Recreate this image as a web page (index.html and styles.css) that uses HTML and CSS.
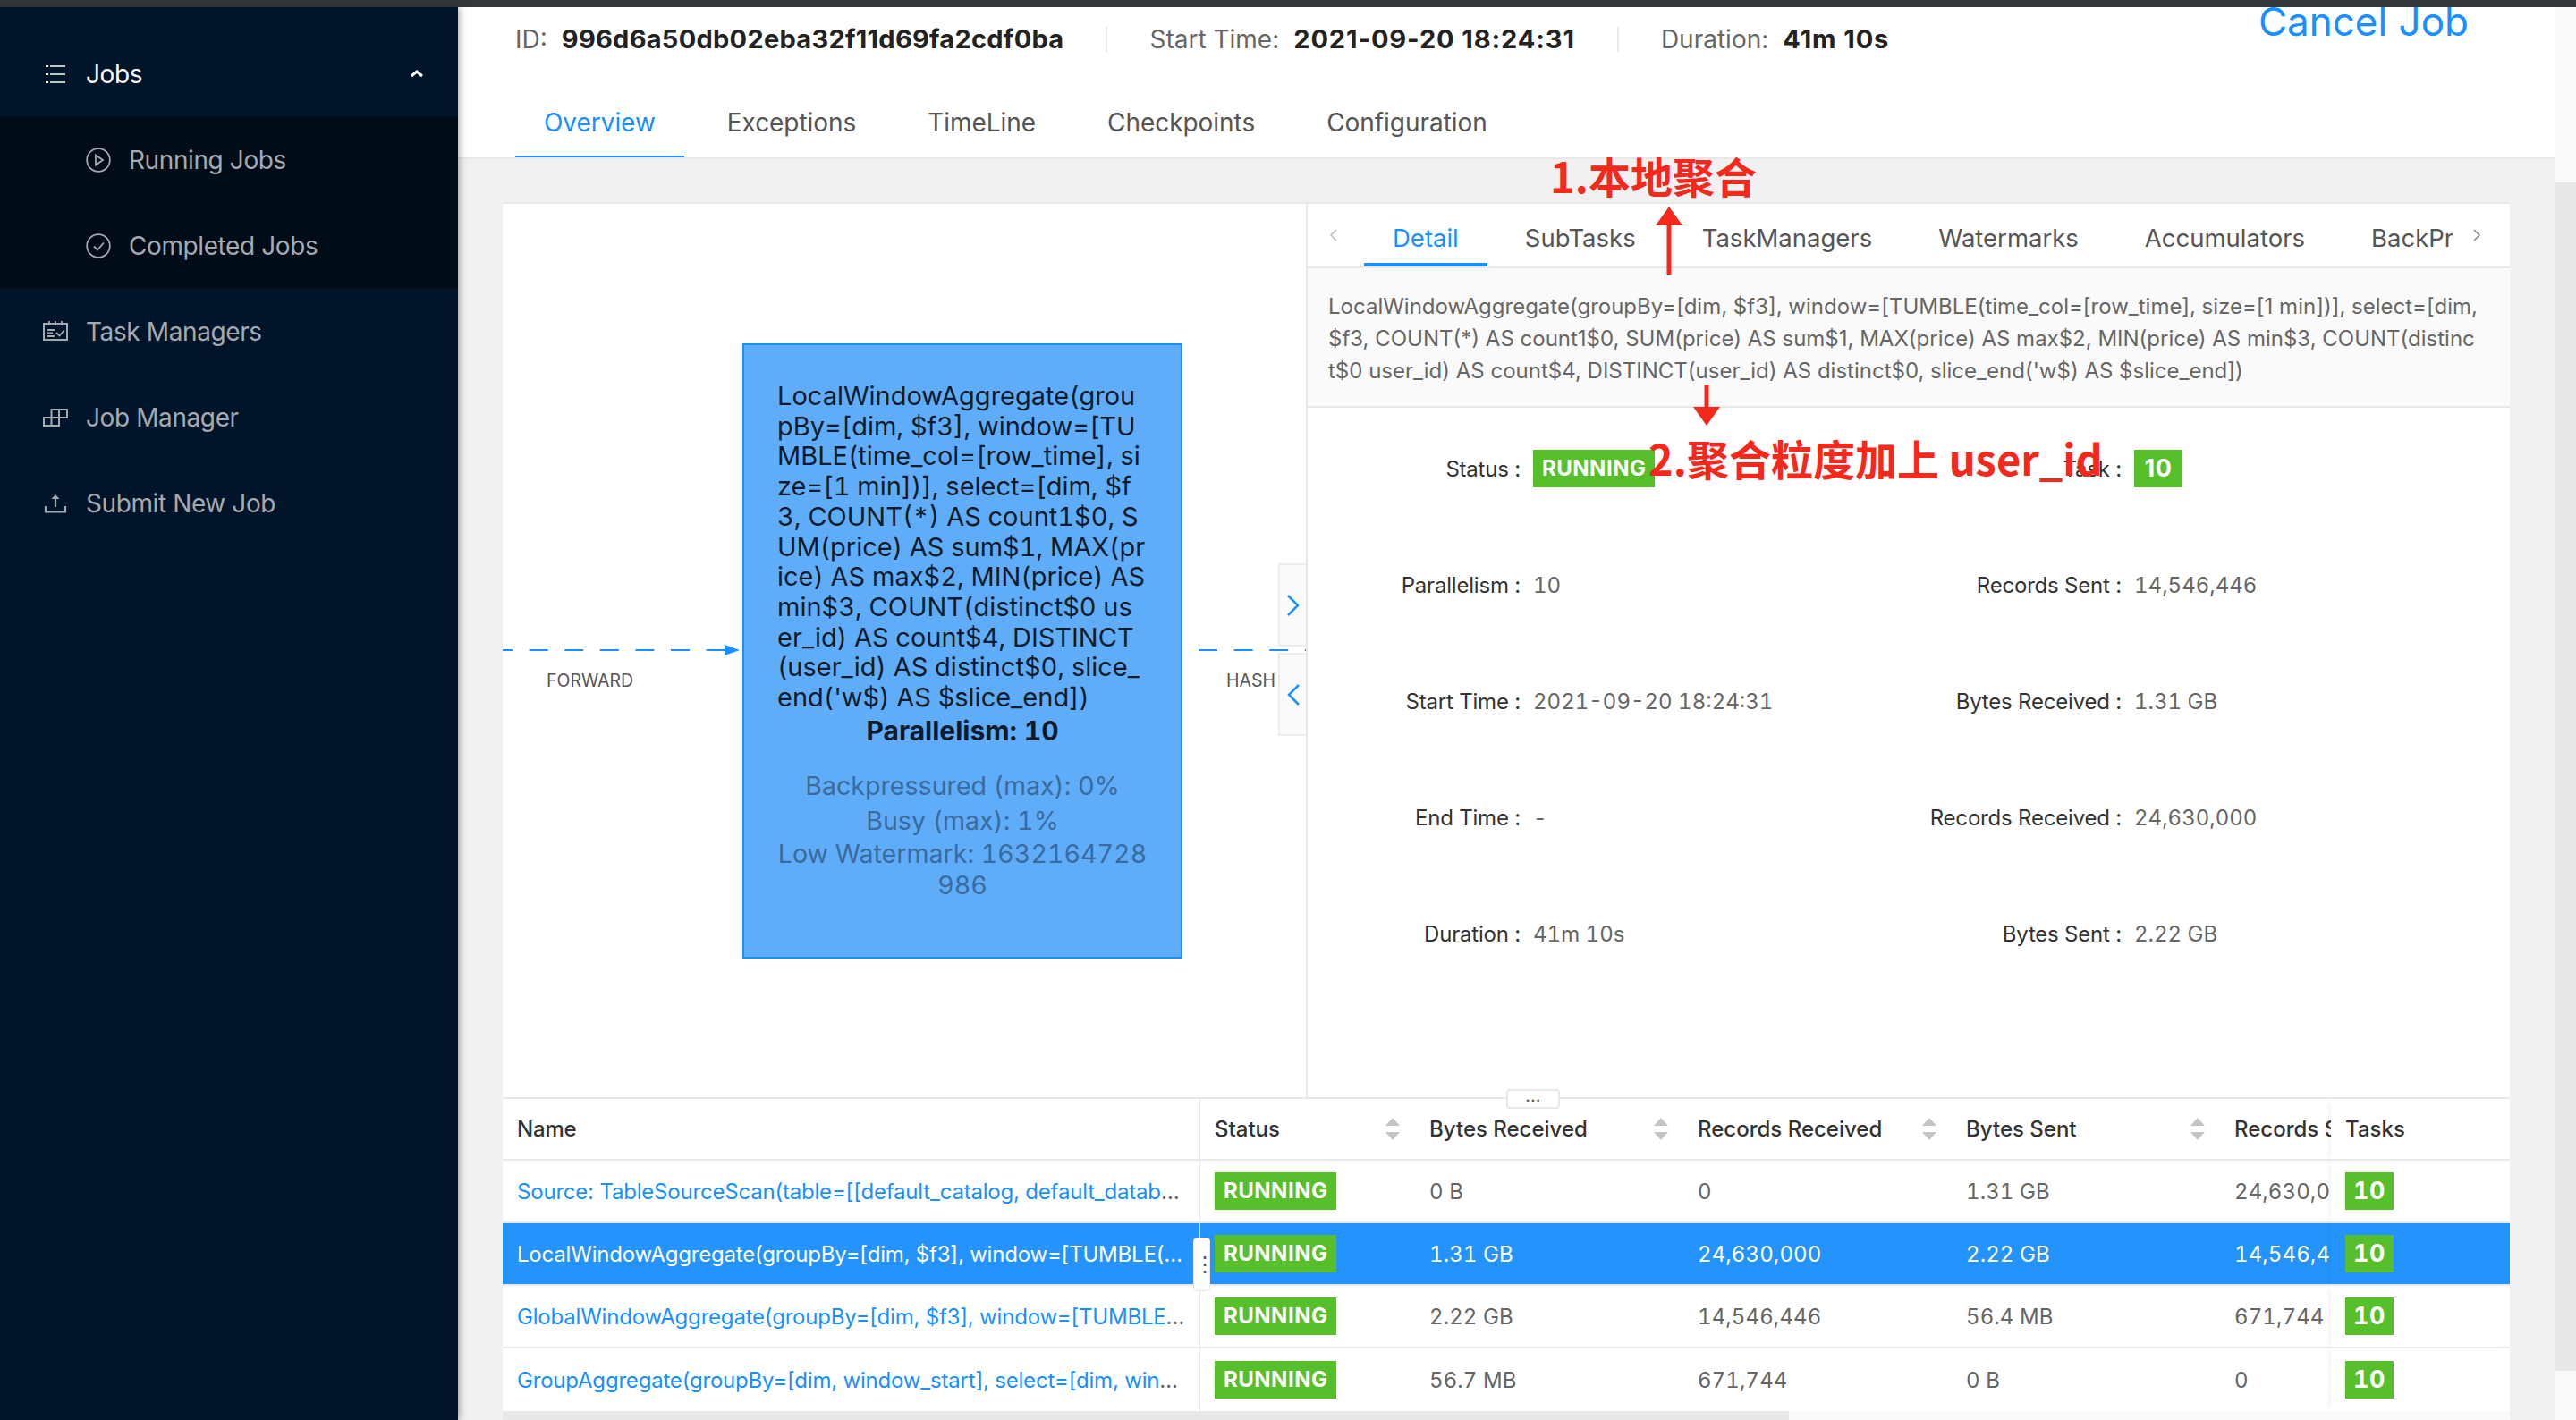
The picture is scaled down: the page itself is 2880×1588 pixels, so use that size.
FILE: index.html
```html
<!DOCTYPE html>
<html lang="en">
<head>
    <meta charset="UTF-8">
    <title>Flink Job Overview</title>
    <link rel="stylesheet" href="styles.css">
</head>
<body>
    <div class="top-strip"></div>
    <div class="page">
        <nav class="sidebar">
            <div class="menu-item menu-open">
                <svg class="menu-icon" viewBox="0 0 28 28"><path d="M8 5h17M8 14h17M8 23h17" fill="none" stroke="currentColor" stroke-width="1.600"/><path d="M3 4h3v2H3zM3 13h3v2H3zM3 22h3v2H3z" fill="currentColor"/></svg>
                <span>Jobs</span>
                <svg class="menu-arrow" viewBox="0 0 16 10"><path d="M2 8l6-5 6 5" fill="none" stroke="currentColor" stroke-width="3"/></svg>
            </div>
            <div class="submenu">
                <div class="menu-item sub-item">
                    <svg class="menu-icon" viewBox="0 0 28 28"><circle cx="14" cy="14" r="12.8" fill="none" stroke="currentColor" stroke-width="1.8"/><path d="M11 8.500l8 5.500-8 5.500z" fill="none" stroke="currentColor" stroke-width="1.8"/></svg>
                    <span>Running Jobs</span>
                </div>
                <div class="menu-item sub-item">
                    <svg class="menu-icon" viewBox="0 0 28 28"><circle cx="14" cy="14" r="12.8" fill="none" stroke="currentColor" stroke-width="1.8"/><path d="M9 14.500l4 4 7-8" fill="none" stroke="currentColor" stroke-width="1.800"/></svg>
                    <span>Completed Jobs</span>
                </div>
            </div>
            <div class="menu-item">
                <svg class="menu-icon" viewBox="0 0 28 28"><path d="M1 5h26v18H1z" fill="none" stroke="currentColor" stroke-width="2"/><path d="M7 2v5M14 2v5M21 2v5M5 12h8M5 15.500h6M5 19h8" fill="none" stroke="currentColor" stroke-width="1.800"/><path d="M15 15l3.500 3.500L24 12" fill="none" stroke="currentColor" stroke-width="1.800"/></svg>
                <span>Task Managers</span>
            </div>
            <div class="menu-item">
                <svg class="menu-icon" viewBox="0 0 28 28"><path d="M1 14h17v9H1zM9.500 14v9M9.500 14V5H27v9h-9M18 5v9" fill="none" stroke="currentColor" stroke-width="2"/></svg>
                <span>Job Manager</span>
            </div>
            <div class="menu-item">
                <svg class="menu-icon" viewBox="0 0 28 28"><path d="M3 17v6.500h22V17M14 18V8" fill="none" stroke="currentColor" stroke-width="2.200"/><path d="M14 4l-4.500 5h9z" fill="currentColor"/></svg>
                <span>Submit New Job</span>
            </div>
        </nav>

        <main class="main">
            <header class="job-header">
                <div class="status-row">
                    <div class="job-info">
                        <span class="info-item"><span class="info-label">ID:</span><b>996d6a50db02eba32f11d69fa2cdf0ba</b></span>
                        <span class="info-item"><span class="info-label">Start Time:</span><b class="num">2021-09-20 18:24:31</b></span>
                        <span class="info-item"><span class="info-label">Duration:</span><b class="num">41m 10s</b></span>
                    </div>
                    <a class="cancel-job">Cancel Job</a>
                </div>
                <div class="job-tabs">
                    <a class="job-tab active">Overview</a>
                    <a class="job-tab">Exceptions</a>
                    <a class="job-tab">TimeLine</a>
                    <a class="job-tab">Checkpoints</a>
                    <a class="job-tab">Configuration</a>
                </div>
            </header>

            <section class="content">
                <div class="panel">
                    <div class="top-split">
                        <div class="graph">
                            <svg class="edges" viewBox="0 0 898 1001">
                                <path d="M0 499H258" stroke="#1890ff" stroke-width="2" stroke-dasharray="21 18.600" stroke-dashoffset="10" fill="none"/>
                                <path d="M248 493l17 6-17 6z" fill="#1890ff"/>
                                <path d="M778 499H898" stroke="#1890ff" stroke-width="2" stroke-dasharray="21 18.600" fill="none"/>
                            </svg>
                            <span class="edge-label edge-forward">FORWARD</span>
                            <span class="edge-label edge-hash">HASH</span>
                            <div class="node">
                                <div class="node-name">LocalWindowAggregate(grou<br>pBy=[dim, $f3], window=[TU<br>MBLE(time_col=[row_time], si<br>ze=[1 min])], select=[dim, $f<br>3, COUNT(*) AS count1$0, S<br>UM(price) AS sum$1, MAX(pr<br>ice) AS max$2, MIN(price) AS<br>min$3, COUNT(distinct$0 us<br>er_id) AS count$4, DISTINCT<br>(user_id) AS distinct$0, slice_<br>end('w$) AS $slice_end])</div>
                                <div class="node-parallel">Parallelism: 10</div>
                                <div class="node-metrics">
                                    <div>Backpressured (max): 0%</div>
                                    <div>Busy (max): 1%</div>
                                    <div class="metric-last">Low Watermark: 1632164728<br>986</div>
                                </div>
                            </div>
                            <div class="graph-toggle toggle-next"><svg viewBox="0 0 16 28"><path d="M2 3l11 11L2 25" fill="none" stroke="#1890ff" stroke-width="2.500"/></svg></div>
                            <div class="graph-toggle toggle-prev"><svg viewBox="0 0 16 28"><path d="M14 3L3 14l11 11" fill="none" stroke="#1890ff" stroke-width="2.500"/></svg></div>
                        </div>

                        <div class="detail">
                            <div class="detail-tabs">
                                <svg class="tab-chevron" viewBox="0 0 10 16"><path d="M8 2L2 8l6 6" fill="none" stroke="#bbb" stroke-width="1.500"/></svg>
                                <div class="detail-tab-list">
                                    <a class="detail-tab active">Detail</a>
                                    <a class="detail-tab">SubTasks</a>
                                    <a class="detail-tab">TaskManagers</a>
                                    <a class="detail-tab">Watermarks</a>
                                    <a class="detail-tab">Accumulators</a>
                                    <a class="detail-tab">BackPressure</a>
                                </div>
                                <svg class="tab-chevron" viewBox="0 0 10 16"><path d="M2 2l6 6-6 6" fill="none" stroke="#888" stroke-width="1.500"/></svg>
                            </div>
                            <div class="description">LocalWindowAggregate(groupBy=[dim, $f3], window=[TUMBLE(time_col=[row_time], size=[1 min])], select=[dim, $f3, COUNT(*) AS count1$0, SUM(price) AS sum$1, MAX(price) AS max$2, MIN(price) AS min$3, COUNT(distinct$0 user_id) AS count$4, DISTINCT(user_id) AS distinct$0, slice_end('w$) AS $slice_end])</div>
                            <div class="props">
                                <div class="prop"><span class="prop-label">Status :</span><span class="tag">RUNNING</span></div>
                                <div class="prop"><span class="prop-label">Task :</span><span class="tag tag-num">10</span></div>
                                <div class="prop"><span class="prop-label">Parallelism :</span><span class="prop-value">10</span></div>
                                <div class="prop"><span class="prop-label">Records Sent :</span><span class="prop-value">14,546,446</span></div>
                                <div class="prop"><span class="prop-label">Start Time :</span><span class="prop-value">2021-09-20 18:24:31</span></div>
                                <div class="prop"><span class="prop-label">Bytes Received :</span><span class="prop-value">1.31 GB</span></div>
                                <div class="prop"><span class="prop-label">End Time :</span><span class="prop-value">-</span></div>
                                <div class="prop"><span class="prop-label">Records Received :</span><span class="prop-value">24,630,000</span></div>
                                <div class="prop"><span class="prop-label">Duration :</span><span class="prop-value">41m 10s</span></div>
                                <div class="prop"><span class="prop-label">Bytes Sent :</span><span class="prop-value">2.22 GB</span></div>
                            </div>
                        </div>
                        <div class="resize-h">...</div>
                    </div>

                    <table class="vertex-table">
                        <colgroup>
                            <col class="col-name"><col class="col-status"><col class="col-num"><col class="col-num"><col class="col-num"><col class="col-cut"><col class="col-tasks">
                        </colgroup>
                        <thead>
                            <tr>
                                <th class="cell-name">Name</th>
                                <th><span class="th-inner">Status<i class="sorter"></i></span></th>
                                <th><span class="th-inner">Bytes Received<i class="sorter"></i></span></th>
                                <th><span class="th-inner">Records Received<i class="sorter"></i></span></th>
                                <th><span class="th-inner">Bytes Sent<i class="sorter"></i></span></th>
                                <th>Records Sent</th>
                                <th class="cell-tasks">Tasks</th>
                            </tr>
                        </thead>
                        <tbody>
                            <tr>
                                <td class="cell-name"><a>Source: TableSourceScan(table=[[default_catalog, default_database, orders]])</a></td>
                                <td><span class="tag">RUNNING</span></td>
                                <td>0 B</td><td>0</td><td>1.31 GB</td><td>24,630,000</td>
                                <td class="cell-tasks"><span class="tag tag-num">10</span></td>
                            </tr>
                            <tr class="selected">
                                <td class="cell-name"><a>LocalWindowAggregate(groupBy=[dim, $f3], window=[TUMBLE(time_col=[row_time]</a></td>
                                <td><span class="tag">RUNNING</span></td>
                                <td>1.31 GB</td><td>24,630,000</td><td>2.22 GB</td><td>14,546,446</td>
                                <td class="cell-tasks"><span class="tag tag-num">10</span></td>
                            </tr>
                            <tr>
                                <td class="cell-name"><a>GlobalWindowAggregate(groupBy=[dim, $f3], window=[TUMBLE(time_col=[row_time]</a></td>
                                <td><span class="tag">RUNNING</span></td>
                                <td>2.22 GB</td><td>14,546,446</td><td>56.4 MB</td><td>671,744</td>
                                <td class="cell-tasks"><span class="tag tag-num">10</span></td>
                            </tr>
                            <tr>
                                <td class="cell-name"><a>GroupAggregate(groupBy=[dim, window_start], select=[dim, window_start, COUNT(*)</a></td>
                                <td><span class="tag">RUNNING</span></td>
                                <td>56.7 MB</td><td>671,744</td><td>0 B</td><td>0</td>
                                <td class="cell-tasks"><span class="tag tag-num">10</span></td>
                            </tr>
                        </tbody>
                    </table>
                    <div class="resize-v">⋮</div>
                    <div class="hscroll"><div class="hscroll-thumb"></div></div>
                </div>
            </section>
        </main>

        <div class="page-scroll"><div class="page-scroll-thumb"></div></div>

        <!-- red notes drawn over the screenshot -->
        <div class="note note-one">1.本地聚合</div>
        <svg class="note-arrow arrow-up" viewBox="0 0 32 76"><path d="M16 18v58" stroke="#f5281c" stroke-width="5"/><path d="M16 0l15 21H1z" fill="#f5281c"/></svg>
        <svg class="note-arrow arrow-down" viewBox="0 0 32 46"><path d="M16 0v28" stroke="#f5281c" stroke-width="5"/><path d="M16 46L31 25H1z" fill="#f5281c"/></svg>
        <div class="note note-two">2.聚合粒度加上 user_id</div>
    </div>
</body>
</html>
```

FILE: styles.css
```css
* { box-sizing: border-box; }
html, body { margin: 0; height: 100%; overflow: hidden; }
body { font-family: Inter, "Noto Sans", sans-serif; font-size: 24px; color: #666; background: #f1f1f1; }

.top-strip { height: 8px; background: #35363a; }
.page { position: relative; display: flex; height: 1580px; }

/* sidebar */
.sidebar { width: 512px; flex: none; padding-top: 26px; background: #001529; box-shadow: 2px 0 8px rgba(0, 21, 41, 0.35); z-index: 1; }
.menu-item { display: flex; align-items: center; gap: 20px; height: 96px; padding: 1px 0 0 48px; color: #a3aab2; font-size: 28px; letter-spacing: -0.4px; }
.menu-open { color: #fff; position: relative; }
.menu-icon { width: 28px; height: 28px; flex: none; }
.menu-arrow { width: 16px; height: 10px; position: absolute; left: 458px; top: 43px; }
.submenu { background: #000c17; }
.sub-item { padding-left: 96px; }

/* header */
.main { flex: 1; min-width: 0; display: flex; flex-direction: column; }
.job-header { height: 170px; flex: none; background: #fff; border-bottom: 2px solid #e8e8e8; overflow: hidden; }
.status-row { display: flex; justify-content: space-between; height: 72px; padding: 0 96px 0 64px; margin-bottom: 16px; }
.job-info { display: flex; align-items: center; }
.info-item { display: flex; gap: 16px; font-size: 28px; padding-right: 47px; margin-right: 47px; border-right: 2px solid #e8e8e8; line-height: 28px; }
.info-item:last-child { border-right: 0; }
.info-label { color: #666; }
.info-item b { color: #222; font-weight: 700; font-size: 29px; letter-spacing: 0.27px; }
.info-item .num { letter-spacing: 0.900px; }
.cancel-job { color: #1890ff; font-size: 44px; line-height: 48px; margin-top: -8px; }
.job-tabs { display: flex; gap: 16px; padding-left: 64px; }
.job-tab { height: 82px; padding: 24px 32px 0; font-size: 28px; letter-spacing: -0.05px; line-height: 34px; color: #555; border-bottom: 4px solid transparent; }
.job-tab.active { color: #1890ff; border-bottom-color: #1890ff; }

/* main panel */
.content { flex: 1; min-height: 0; padding: 50px 50px 0; overflow: hidden; }
.panel { position: relative; background: #fff; height: 1352px; box-shadow: 0 -2px 0 #e8e8e8; }
.top-split { position: relative; display: flex; height: 1001px; border-bottom: 2px solid #e8e8e8; }
.graph { position: relative; width: 898px; flex: none; overflow: hidden; }
.edges { position: absolute; left: 0; top: 0; width: 898px; height: 1001px; }
.edge-label { position: absolute; top: 521px; font-size: 19.500px; line-height: 24px; color: #555; }
.edge-forward { left: 49px; }
.edge-hash { left: 809px; }
.node { position: absolute; left: 268px; top: 156px; width: 492px; height: 688px; padding: 40px 0 0 37px; background: #5fadf9; border: 2px solid #1890ff; color: #0d1c2c; font-size: 29px; line-height: 33.700px; font-variant-numeric: tabular-nums; }
.node-name { white-space: nowrap; }
.node-parallel { margin: 4px 37px 0 0; text-align: center; font-weight: 700; font-size: 30px; }
.node-metrics { margin: 25px 37px 0 0; text-align: center; color: #3b6a9e; font-size: 28.600px; line-height: 39px; white-space: nowrap; }
.metric-last { line-height: 35px; }
.graph-toggle { position: absolute; right: 0; width: 31px; height: 93px; display: flex; align-items: center; justify-content: center; background: #fafafa; border: 2px solid #ececec; border-right: 0; }
.graph-toggle svg { width: 16px; height: 28px; }
.toggle-next { top: 402px; }
.toggle-prev { top: 502px; }

/* detail */
.detail { flex: 1; min-width: 0; border-left: 2px solid #e8e8e8; }
.detail-tabs { display: flex; align-items: center; height: 72px; border-bottom: 2px solid #e8e8e8; padding: 0 32px 0 24px; }
.tab-chevron { width: 10px; height: 16px; flex: none; }
.detail-tab-list { flex: 1; min-width: 0; display: flex; gap: 10px; padding-left: 29px; margin-right: 22px; overflow: hidden; }
.detail-tab { flex: none; height: 70px; padding: 6px 32px 0; line-height: 64px; font-size: 27.500px; color: #555; border-bottom: 4px solid transparent; }
.detail-tab.active { color: #1890ff; border-bottom-color: #1890ff; }
.description { height: 156px; padding: 25px 34px 0 23px; background: #fafafa; border-bottom: 2px solid #e8e8e8; line-height: 36px; font-size: 24px; word-break: break-all; color: #666; }
.props { display: grid; grid-template-columns: 1fr 1fr; grid-auto-rows: 130px; padding-top: 3px; }
.prop { display: flex; align-items: center; }
.prop-label { width: 238px; text-align: right; color: #333; margin-right: 14px; flex: none; white-space: nowrap; letter-spacing: -0.2px; }
.prop-value { color: #666; font-variant-numeric: tabular-nums; }
.tag { display: inline-block; height: 42px; line-height: 42px; padding: 0 10px; background: #57bf2b; color: #fff; font-weight: 700; font-size: 24px; letter-spacing: 0.5px; vertical-align: middle; }
.tag-num { width: 54px; padding: 0; text-align: center; font-size: 27px; }
.resize-h { position: absolute; left: 1122px; top: 990px; width: 60px; height: 22px; background: #fff; border: 2px solid #e8e8e8; border-radius: 4px; text-align: center; font-size: 20px; line-height: 10px; color: #555; }

/* table */
.vertex-table { width: 2244px; table-layout: fixed; border-collapse: separate; border-spacing: 0; }
.col-name { width: 780px; }
.col-status { width: 240px; }
.col-num { width: 300px; }
.col-cut { width: 124px; }
.col-tasks { width: 200px; }
.vertex-table th, .vertex-table td { height: 70px; padding: 0 0 0 16px; border-bottom: 2px solid #e8e8e8; font-size: 24px; text-align: left; white-space: nowrap; overflow: hidden; }
.vertex-table th { color: #333; font-weight: 500; height: 69px; }
.vertex-table td { color: #666; letter-spacing: 0.1px; font-variant-numeric: tabular-nums; }
.vertex-table tr:last-child td { border-bottom: 0; }
.cell-name { border-right: 1px solid #e8e8e8; }
.vertex-table .cell-name { padding-left: 16px; padding-right: 12px; text-overflow: ellipsis; letter-spacing: -0.2px; font-variant-numeric: normal; }
.cell-name a { color: #1890ff; }
.th-inner { display: flex; align-items: center; justify-content: space-between; padding-right: 17px; }
.sorter { display: block; position: relative; width: 16px; height: 25px; }
.sorter::before, .sorter::after { content: ""; position: absolute; left: 0; width: 16px; height: 9px; background: #c4c4c4; }
.sorter::before { top: 0; clip-path: polygon(50% 0, 100% 100%, 0 100%); }
.sorter::after { bottom: 0; clip-path: polygon(0 0, 100% 0, 50% 100%); }
.cell-tasks { box-shadow: -6px 0 6px -4px rgba(0, 0, 0, 0.06); background: #fff; position: relative; }
.selected td { background: #2593fc; color: #fff; border-bottom-color: #e8e8e8; }
.selected .cell-name a { color: #fff; }
.resize-v { position: absolute; left: 772px; top: 1156px; width: 19px; height: 60px; padding-right: 8px; background: #fff; border: 1px solid #e8e8e8; border-radius: 4px; color: #555; font-size: 24px; line-height: 58px; text-align: center; }
.hscroll { height: 12px; background: #fafafa; }
.hscroll-thumb { width: 1438px; height: 12px; background: #e8e8e8; }

/* page scrollbar */
.page-scroll { width: 24px; flex: none; background: #fafafa; padding-top: 196px; }
.page-scroll-thumb { height: 1329px; background: #e8e8e8; }

/* notes */
.note { position: absolute; color: #f5281c; font-family: "Noto Sans CJK SC", sans-serif; font-weight: 700; font-size: 47px; line-height: 56px; white-space: nowrap; z-index: 2; }
.note-one { left: 1733px; top: 160px; }
.note-two { left: 1843px; top: 476px; }
.note-arrow { position: absolute; z-index: 2; }
.arrow-up { left: 1850px; top: 223px; width: 32px; height: 76px; }
.arrow-down { left: 1892px; top: 422px; width: 32px; height: 46px; }
```
